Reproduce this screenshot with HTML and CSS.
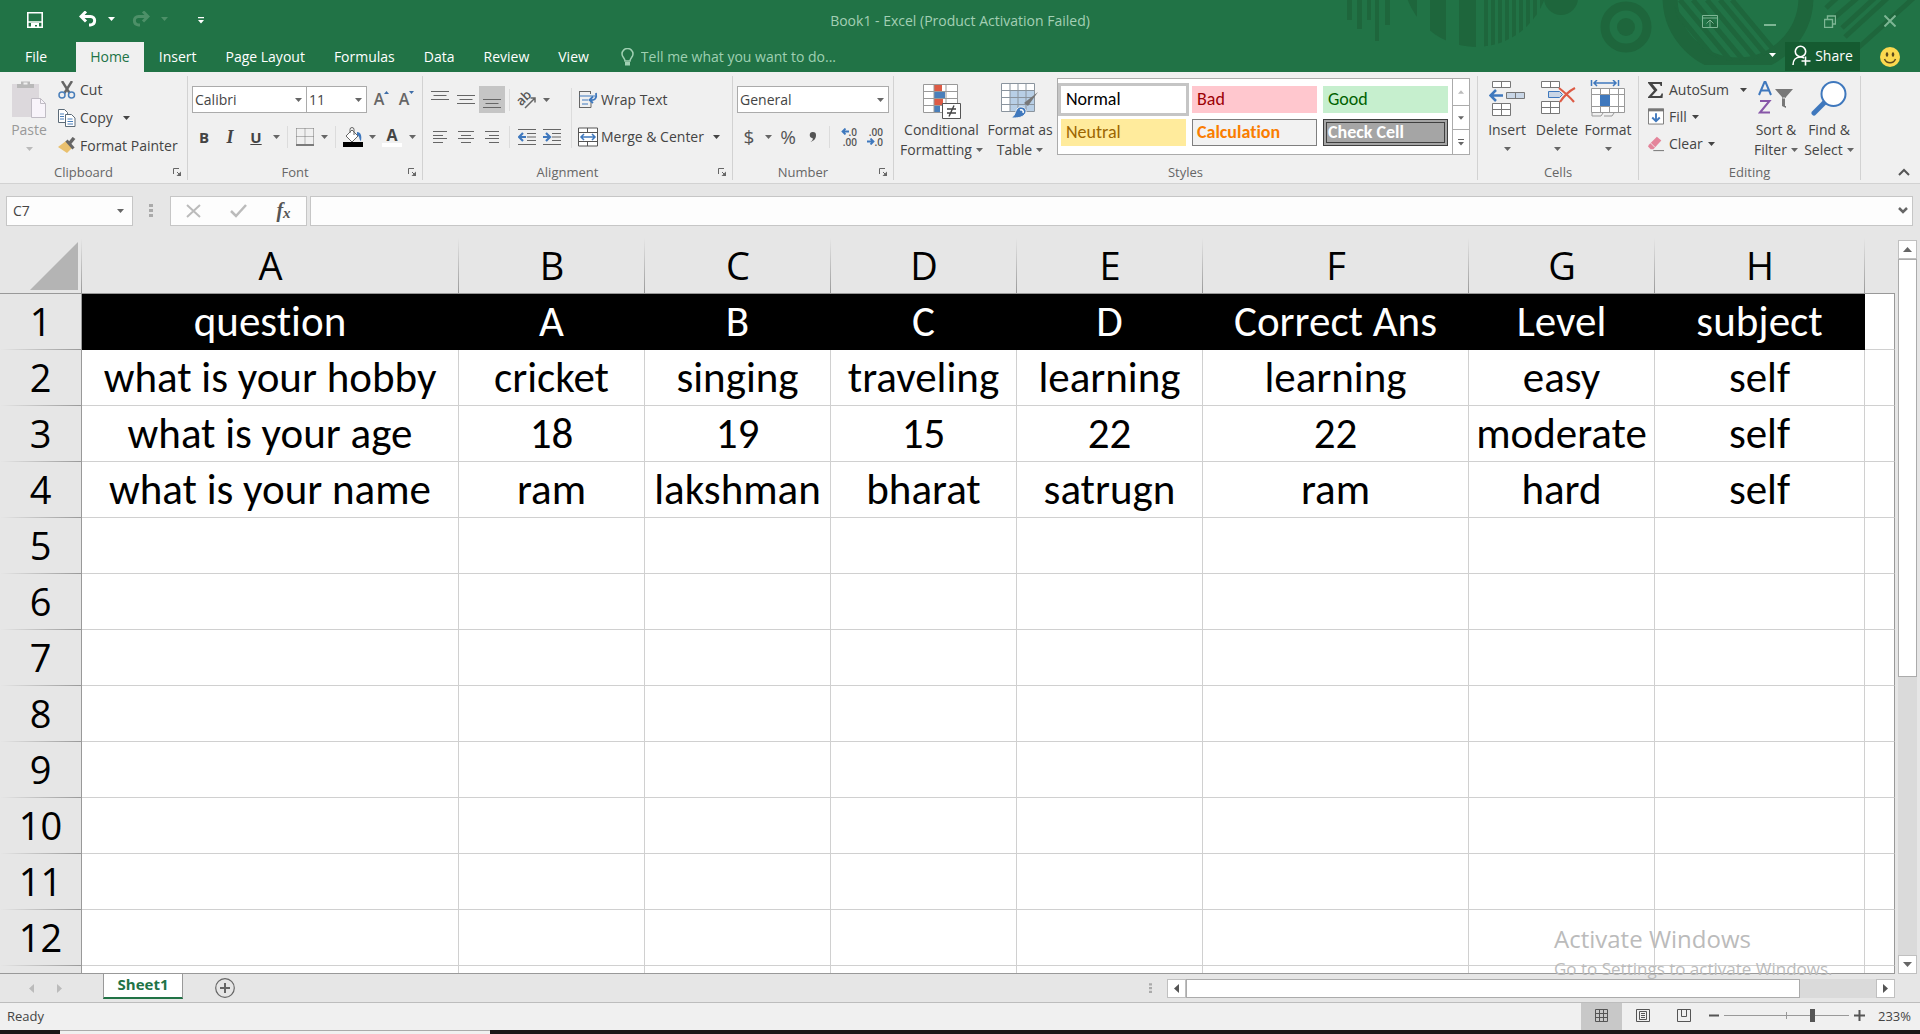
FILE: index.html
```html
<!DOCTYPE html>
<html lang="en">
<head>
<meta charset="utf-8">
<meta name="viewport" content="width=device-width, initial-scale=1">
<title>Book1 - Excel</title>
<link rel="stylesheet" href="styles.css">
</head>
<body>
<svg width="0" height="0" class="defs" aria-hidden="true">
  <symbol id="caret" viewBox="0 0 7 4"><path d="M0 0h7L3.5 4z" fill="currentColor"/></symbol>
  <symbol id="launcher" viewBox="0 0 9 9"><path d="M.5 6V.5H6M4 4l3 3" fill="none" stroke="#666"/><path d="M8 3.500V8H3.500z" fill="#666"/></symbol>
</svg>

<header class="top">
  <svg class="art" viewBox="0 0 590 72" width="590" height="72" aria-hidden="true">
    <defs>
      <clipPath id="c1"><circle cx="146" cy="-26" r="73"/></clipPath>
      <clipPath id="c2"><rect x="320" y="0" width="180" height="65"/></clipPath>
      <clipPath id="c3"><circle cx="408" cy="-3" r="64"/></clipPath>
    </defs>
    <g fill="#1e663c">
      <path d="M17 0h5v20h-5zM27 0h5v29h-5zM37 0h4v20h-4zM45 0h4v41h-4zM55 0h5v25h-5z"/>
      <path clip-path="url(#c1)" d="M72 0h15v50H72zM100 0h16v50h-16zM129 0h17v50h-17zM154 0h4v50h-4zM161 0h4v50h-4zM168 0h4v50h-4zM175 0h4v50h-4zM182 0h4v50h-4zM189 0h4v50h-4zM196 0h4v50h-4zM203 0h4v50h-4zM210 0h4v50h-4z"/>
      <circle cx="231" cy="-2" r="17"/>
      <circle cx="296" cy="27" r="9"/>
    </g>
    <g fill="none" stroke="#1e663c">
      <circle cx="296" cy="27" r="21" stroke-width="9"/>
      <circle clip-path="url(#c2)" cx="408" cy="-3" r="68" stroke-width="15"/>
      <path clip-path="url(#c3)" stroke-width="5" d="M336 0l60 72M350 0l60 72M363 0l60 72M377 0l60 72M390 0l60 72M402 0l50 60"/>
      <path stroke-width="5" d="M496 8l14-13M504 18l28-24M512 28l36-33M515 37l48-44M528 48l60-54"/>
    </g>
  </svg>
  <div class="titlebar">
    <div class="qat">
      <button class="q-save" aria-label="Save"><svg width="16" height="16" viewBox="0 0 16 16"><path d="M.8.8h14.400v14.400H.8zM1 10h14" fill="none" stroke="#fff" stroke-width="1.600"/><path d="M4 11h8v5h-2v-3H8v3H4z" fill="#fff"/></svg></button>
      <button class="q-undo" aria-label="Undo"><svg width="18" height="16" viewBox="0 0 18 16"><path d="M2 5.500h9.500c5.500 0 5.500 8 0 8.500H10" fill="none" stroke="#fff" stroke-width="3"/><path d="M7 .5L2 5.500l5 5" fill="none" stroke="#fff" stroke-width="3"/></svg></button>
      <button class="q-caret" aria-label="Undo list"><svg width="7" height="4"><use href="#caret"/></svg></button>
      <button class="q-redo" aria-label="Redo" disabled><svg width="18" height="16" viewBox="0 0 18 16"><path d="M16 5.500H6.500C1 5.500 1 13.500 6.500 14H8M11 .5l5 5-5 5" fill="none" stroke="#4d9068" stroke-width="3"/></svg></button>
      <button class="q-caret dim" aria-label="Redo list" disabled><svg width="7" height="4"><use href="#caret"/></svg></button>
      <button class="q-more" aria-label="Customize Quick Access Toolbar"><svg width="6" height="7" viewBox="0 0 6 7"><path d="M0 0h6v1.200H0zM0 3h6L3 6.500z" fill="#fff"/></svg></button>
    </div>
    <h1 class="title">Book1 - Excel (Product Activation Failed)</h1>
    <div class="winbtns">
      <button aria-label="Ribbon Display Options"><svg width="16" height="13" viewBox="0 0 16 13"><path d="M.5.5h15v12H.5zM.5 3h15M8 12V6M4.500 8.500L8 5l3.500 3.500" fill="none" stroke="#7db694"/></svg></button>
      <button aria-label="Minimize"><svg width="12" height="13" viewBox="0 0 12 13"><path d="M0 9h12v2H0z" fill="#7db694"/></svg></button>
      <button aria-label="Restore"><svg width="12" height="13" viewBox="0 0 12 13"><path d="M.5 4.500h8v8h-8zM3.500 4V1h8v8H9" fill="none" stroke="#7db694" stroke-width="1.400"/></svg></button>
      <button aria-label="Close"><svg width="12" height="12" viewBox="0 0 12 12"><path d="M.5.5l11 11M11.500.5l-11 11" stroke="#7db694" stroke-width="2"/></svg></button>
    </div>
  </div>
  <nav class="tabs">
    <a class="tab file" href="#file">File</a>
    <a class="tab active" href="#home" aria-current="page">Home</a>
    <a class="tab" href="#insert">Insert</a>
    <a class="tab" href="#layout">Page Layout</a>
    <a class="tab" href="#formulas">Formulas</a>
    <a class="tab" href="#data">Data</a>
    <a class="tab" href="#review">Review</a>
    <a class="tab" href="#view">View</a>
    <label class="tell"><svg width="13" height="19" viewBox="0 0 13 19"><path d="M4 13c0-3-3-3.500-3-7a5.500 5.500 0 0 1 11 0c0 3.500-3 4-3 7z" fill="none" stroke="#9fd0b2" stroke-width="1.500"/><path d="M4 14h5v3.500H4z" fill="#9fd0b2"/></svg><input type="text" placeholder="Tell me what you want to do..." aria-label="Tell me what you want to do"></label>
    <div class="account">
      <button class="acct-caret" aria-label="Account menu"><svg width="7" height="4"><use href="#caret"/></svg></button>
      <button class="share"><svg width="19" height="21" viewBox="0 0 19 21"><g fill="none" stroke="#fff" stroke-width="1.600"><circle cx="8.500" cy="6.500" r="5.200"/><path d="M1 20c0-4.500 2.500-8 7.500-8 1.500 0 2.500.3 3.500 1M13.500 11.500v9M9.500 16h9"/></g></svg>Share</button>
      <button class="smile" aria-label="Send a smile"><svg width="20" height="20" viewBox="0 0 20 20"><circle cx="10" cy="10" r="10" fill="#fbd94f"/><ellipse cx="7" cy="7.500" rx="1.300" ry="2.300" fill="#5c4a1c"/><ellipse cx="13" cy="7.500" rx="1.300" ry="2.300" fill="#5c4a1c"/><path d="M4.500 12c2 5 9 5 11 0" fill="none" stroke="#5c4a1c" stroke-width="1.500"/></svg></button>
    </div>
  </nav>
</header>

<section class="ribbon" aria-label="Home ribbon">
  <div class="group g-clip">
    <div class="body">
      <button class="big paste" disabled>
        <svg width="35" height="40" viewBox="0 0 35 40"><path d="M0 4h27v33H0z" fill="#dcd8dc"/><path d="M5 8V4h4V1.500h9V4h4v4z" fill="#b9b9b9"/><path d="M11.500 2.500h4v2h-4z" fill="#f0f0f0"/><path d="M19.500 18.500h9l5 5v14h-14z" fill="#f8f4fa" stroke="#c0bcc4"/><path d="M28.500 18.500v5h5" fill="none" stroke="#c0bcc4"/></svg>
        <span>Paste</span><svg width="7" height="4" viewBox="0 0 7 4"><path d="M0 0h7L3.500 4z" fill="#bbb"/></svg>
      </button>
      <div class="lines">
        <button class="line"><svg width="18" height="18" viewBox="0 0 18 18"><path d="M4 0l7.500 12M14 0L6.500 12" stroke="#666" stroke-width="2.400"/><g fill="none" stroke="#4a7fba" stroke-width="1.500"><circle cx="4" cy="14" r="3"/><circle cx="13.500" cy="14" r="3"/></g></svg>Cut</button>
        <button class="line"><svg width="18" height="18" viewBox="0 0 18 18"><g fill="#fff" stroke="#5c6b78"><path d="M.5.5h6l3 3v10h-9z"/><path d="M7.500 5.500h6l3.500 3.500v8.500h-9.500z"/></g><path d="M2 5h4M2 7.500h4M2 10h4M9.500 10h5M9.500 12.500h5.500M9.500 15h5.500" stroke="#4a7fba"/></svg>Copy<svg class="gap" width="7" height="4"><use href="#caret"/></svg></button>
        <button class="line"><svg width="18" height="18" viewBox="0 0 18 18"><path d="M8 4l6 7-5 5-9-6z" fill="#e9c06e"/><path d="M8.500 3.500l7 8" stroke="#666" stroke-width="3"/><path d="M11 7l5-6" stroke="#666" stroke-width="3.500"/></svg>Format Painter</button>
      </div>
    </div>
    <div class="foot"><span>Clipboard</span><button aria-label="Clipboard settings"><svg width="9" height="9"><use href="#launcher"/></svg></button></div>
  </div>

  <div class="group g-font">
    <div class="body rows">
      <div class="row">
        <label class="combo w-font"><select aria-label="Font"><option>Calibri</option></select><svg width="7" height="4"><use href="#caret"/></svg></label><label class="combo w-size"><select aria-label="Font size"><option>11</option></select><svg width="7" height="4"><use href="#caret"/></svg></label>
        <button class="tb step" aria-label="Increase font size"><span class="up">A</span><svg width="5" height="3" viewBox="0 0 7 4"><path d="M0 4h7L3.500 0z" fill="#3d6da8"/></svg></button>
        <button class="tb step" aria-label="Decrease font size"><span class="down">A</span><svg width="5" height="3" viewBox="0 0 7 4"><path d="M0 0h7L3.500 4z" fill="#3d6da8"/></svg></button>
      </div>
      <div class="row">
        <button class="tb b">B</button><button class="tb i">I</button><button class="tb u">U</button><button class="dd" aria-label="Underline styles"><svg width="7" height="4"><use href="#caret"/></svg></button>
        <i class="sep"></i>
        <button class="tb n" aria-label="Borders"><svg width="18" height="18" viewBox="0 0 18 18"><path d="M.5.5v16M17.500.5v16M9 .5v16M.5.5h17M.5 8.500h17" stroke="#777" stroke-dasharray="1 1" fill="none"/><path d="M0 17h18" stroke="#555" stroke-width="1.500"/></svg></button><button class="dd" aria-label="Border styles"><svg width="7" height="4"><use href="#caret"/></svg></button>
        <i class="sep"></i>
        <button class="tb n" aria-label="Fill color"><svg width="20" height="20" viewBox="0 0 20 20"><path d="M3 9l6-6 6 6-6 6z" fill="#fff" stroke="#666"/><path d="M7 6V2.500a2 2 0 0 1 4 0V8" fill="none" stroke="#666"/><path d="M14 5c4 0 5 4 4 9-2-1-1-5-4-6z" fill="#3f78bd"/><path d="M0 15h20v5H0z" fill="#000"/></svg></button><button class="dd" aria-label="Fill colors"><svg width="7" height="4"><use href="#caret"/></svg></button>
        <button class="tb fc" aria-label="Font color"><span>A</span></button><button class="dd" aria-label="Font colors"><svg width="7" height="4"><use href="#caret"/></svg></button>
      </div>
    </div>
    <div class="foot"><span>Font</span><button aria-label="Font settings"><svg width="9" height="9"><use href="#launcher"/></svg></button></div>
  </div>

  <div class="group g-align">
    <div class="body">
      <div class="rows">
        <div class="row">
          <button class="tb" aria-label="Top align"><svg width="18" height="18" viewBox="0 0 18 18"><path d="M0 .5h18M2.500 4.500h13M0 8.500h18" stroke="#666"/></svg></button><button class="tb" aria-label="Middle align"><svg width="18" height="18" viewBox="0 0 18 18"><path d="M0 4.500h18M2.500 8.500h13M0 12.500h18" stroke="#666"/></svg></button><button class="tb on" aria-label="Bottom align" aria-pressed="true"><svg width="18" height="18" viewBox="0 0 18 18"><path d="M0 8.500h18M2.500 12.500h13M0 16.500h18" stroke="#666"/></svg></button>
          <i class="sep"></i>
          <button class="tb n" aria-label="Orientation"><svg class="free" width="20" height="20" viewBox="0 0 20 20"><text x="-1" y="12" transform="rotate(-45 7 8)" class="ab">ab</text><path d="M8 18L18 8M13.500 8H18v4.500" fill="none" stroke="#666" stroke-width="1.500"/></svg></button><button class="dd" aria-label="Orientations"><svg width="7" height="4"><use href="#caret"/></svg></button>
        </div>
        <div class="row">
          <button class="tb" aria-label="Align left"><svg width="14" height="14" viewBox="0 0 14 14"><path d="M0 1.500h14M0 5.500h10M0 8.500h14M0 12.500h10" stroke="#666"/></svg></button><button class="tb" aria-label="Center"><svg width="16" height="14" viewBox="0 0 16 14"><path d="M0 1.500h16M3 5.500h10M0 8.500h16M3 12.500h10" stroke="#666"/></svg></button><button class="tb" aria-label="Align right"><svg width="14" height="14" viewBox="0 0 14 14"><path d="M0 1.500h14M4 5.500h10M0 8.500h14M4 12.500h10" stroke="#666"/></svg></button>
          <i class="sep"></i>
          <button class="tb n" aria-label="Decrease indent"><svg width="18" height="16" viewBox="0 0 18 16"><path d="M0 .5h18M9 4.500h9M9 8h9M9 11.500h9M0 15.500h18" stroke="#666"/><path d="M8 8H2M5 4L1 8l4 4" fill="none" stroke="#3f78bd" stroke-width="2.200"/></svg></button><button class="tb" aria-label="Increase indent"><svg width="18" height="16" viewBox="0 0 18 16"><path d="M0 .5h18M9 4.500h9M9 8h9M9 11.500h9M0 15.500h18" stroke="#666"/><path d="M0 8h6M3 4l4 4-4 4" fill="none" stroke="#3f78bd" stroke-width="2.200"/></svg></button>
        </div>
      </div>
      <i class="tall"></i>
      <div class="rows">
        <div class="row"><button class="line"><svg width="20" height="19" viewBox="0 0 20 19"><path d="M1.500 1.500h11M1.500 1v17M1 17.500h12V12M12.500 1v3" fill="none" stroke="#666"/><path d="M1.500 6h16M4 10h6M4 14h6" stroke="#3f78bd"/><path d="M18 3c1 5-1 8-6 7M15 6.500L11.500 10l3.500 3" fill="none" stroke="#3f78bd" stroke-width="1.800"/></svg>Wrap Text</button></div>
        <div class="row"><button class="line"><svg width="20" height="20" viewBox="0 0 20 20"><path d="M.5 1h19v18H.5zM.5 5.500h19M.5 14.500h19M9.500 1v4.500M9.500 14.500V19" fill="#fff" stroke="#555"/><path d="M3 10h14M6 7l-3 3 3 3M14 7l3 3-3 3" fill="none" stroke="#3f78bd" stroke-width="1.500"/></svg>Merge &amp; Center<svg class="gap" width="7" height="4"><use href="#caret"/></svg></button></div>
      </div>
    </div>
    <div class="foot"><span>Alignment</span><button aria-label="Alignment settings"><svg width="9" height="9"><use href="#launcher"/></svg></button></div>
  </div>

  <div class="group g-num">
    <div class="body rows">
      <div class="row"><label class="combo w-num"><select aria-label="Number format"><option>General</option></select><svg width="7" height="4"><use href="#caret"/></svg></label></div>
      <div class="row">
        <button class="tb n sym">$</button><button class="dd" aria-label="Currencies"><svg width="7" height="4"><use href="#caret"/></svg></button><button class="tb sym">%</button><button class="tb n" aria-label="Comma style"><svg width="8" height="12" viewBox="0 0 8 12"><path d="M4 1a3 3 0 0 1 3 3c0 4-2 5.500-5.500 7C4 9 4 8 3.500 7A3 3 0 0 1 4 1z" fill="#555"/></svg></button>
        <i class="sep"></i>
        <button class="tb dec" aria-label="Increase decimal"><span><svg width="8" height="7" viewBox="0 0 8 7"><path d="M8 3.500H2M4.500.5l-3 3 3 3" fill="none" stroke="#3f78bd" stroke-width="1.800"/></svg>.0</span><span>.00</span></button><button class="tb dec" aria-label="Decrease decimal"><span>.00</span><span><svg width="8" height="7" viewBox="0 0 8 7"><path d="M0 3.500h6M3.500.5l3 3-3 3" fill="none" stroke="#3f78bd" stroke-width="1.800"/></svg>.0</span></button>
      </div>
    </div>
    <div class="foot"><span>Number</span><button aria-label="Number settings"><svg width="9" height="9"><use href="#launcher"/></svg></button></div>
  </div>

  <div class="group g-styles">
    <div class="body">
      <button class="big cf">
        <svg width="38" height="40" viewBox="0 0 38 40"><path d="M.5 4.500h34v28H.5z" fill="#fff"/><path d="M11 4h8v7h-8zM11 18h9v8h-9z" fill="#dd5b45"/><path d="M11 11h11v7H11zM11 26h6v7h-6z" fill="#4a7fba"/><path d="M.5 4.500h34v28H.5zM.5 11.500h34M.5 18.500h34M.5 25.500h34M11 4v29M23 4v29" fill="none" stroke="#999"/><path d="M19.500 23.500h18v15h-18z" fill="#fff" stroke="#555"/><path d="M24 29h9M24 33h9M31 25.500l-5 11" stroke="#444" stroke-width="1.400"/></svg>
        <span>Conditional</span><span>Formatting <svg width="7" height="4"><use href="#caret"/></svg></span>
      </button>
      <button class="big ft">
        <svg width="38" height="40" viewBox="0 0 38 40"><path d="M.5 3.500h33v28H.5z" fill="#fff"/><path d="M9 10h25v21H9z" fill="#b8cfe6"/><path d="M.5 3.500h33v28H.5zM.5 10.500h33M.5 17.500h33M.5 24.500h33M9 3.500v28M17 3.500v28M25 3.500v28" fill="none" stroke="#8a949e"/><path d="M37 12L27 26l-4-3z" fill="#777"/><path d="M10 38c4-2 4-6 6-9 4-5 12 0 8 5-3 4-8 4-14 4z" fill="#3f78bd" stroke="#f0f0f0"/><path d="M19 30c2-1 4 1 3 3" fill="none" stroke="#fff" stroke-width="1.500"/></svg>
        <span>Format as</span><span>Table <svg width="7" height="4"><use href="#caret"/></svg></span>
      </button>
      <div class="gallery">
        <div class="swatches">
          <button class="sw normal">Normal</button><button class="sw bad">Bad</button><button class="sw good">Good</button>
          <button class="sw neutral">Neutral</button><button class="sw calc">Calculation</button><button class="sw check">Check Cell</button>
        </div>
        <div class="gscroll">
          <button aria-label="Previous styles" disabled><svg width="6" height="4" viewBox="0 0 7 4"><path d="M0 4h7L3.500 0z" fill="#bbb"/></svg></button>
          <button aria-label="Next styles"><svg width="6" height="4"><use href="#caret"/></svg></button>
          <button aria-label="More styles"><svg width="6" height="7" viewBox="0 0 6 7"><path d="M0 0h6v1H0zM0 3h6L3 6.500z" fill="#666"/></svg></button>
        </div>
      </div>
    </div>
    <div class="foot"><span>Styles</span></div>
  </div>

  <div class="group g-cells">
    <div class="body">
      <button class="big ins">
        <svg width="37" height="40" viewBox="0 0 37 40"><g fill="#fff" stroke="#777"><path d="M3.500 1.500h18v6h-18zM12.500 1.500v6M3.500 23.500h18v12h-18zM12.500 23.500v12M3.500 29.500h18"/><path d="M17.500 12.500h18v6h-18zM26.500 12.500v6" fill="#c9d6e6"/></g><path d="M14 15.500H3M7 10l-5.500 5.500L7 21" fill="none" stroke="#3f78bd" stroke-width="2.500"/></svg>
        <span>Insert</span><svg width="7" height="4"><use href="#caret"/></svg>
      </button>
      <button class="big del">
        <svg width="37" height="40" viewBox="0 0 37 40"><g fill="#fff" stroke="#777"><path d="M2.500 1.500h18v6h-18zM11.500 1.500v6M2.500 21.500h18v12h-18zM11.500 21.500v12M2.500 27.500h18"/><path d="M9.500 11.500h11l3 3-3 3h-11z" fill="#c9d6e6" stroke="#3f78bd"/></g><path d="M20 8c5 4 10 8 15 14M36 8c-6 3-11 8-15 14" fill="none" stroke="#dd5b45" stroke-width="2.200"/></svg>
        <span>Delete</span><svg width="7" height="4"><use href="#caret"/></svg>
      </button>
      <button class="big fmt">
        <svg width="37" height="40" viewBox="0 0 37 40"><path d="M1.500 0v6M28.500 0v6M4 3h22M7 0L4 3l3 3M23 0l3 3-3 3" fill="none" stroke="#3f78bd" stroke-width="1.500"/><path d="M1.500 8.500h33v24h-33z" fill="#fff"/><path d="M1.500 8.500h33v24h-33zM1.500 14.500h33M1.500 26.500h33M10.500 8.500v24M19.500 8.500v24M28.500 8.500v24M2 33v3h9l2-3M14 36h8l2-3" fill="none" stroke="#999"/><path d="M10 15h10v11H10z" fill="#3f78bd"/></svg>
        <span>Format</span><svg width="7" height="4"><use href="#caret"/></svg>
      </button>
    </div>
    <div class="foot"><span>Cells</span></div>
  </div>

  <div class="group g-edit">
    <div class="body">
      <div class="lines">
        <button class="line"><svg width="16" height="16" viewBox="0 0 16 16"><path d="M0 0h14v4h-1.500c0-1.500-.5-2-2-2H4.500l5 6-5.500 6h7c1.500 0 2-.5 2.500-2.500H15L14.500 16H0v-1l6-6.500L0 1z" fill="#444"/></svg>AutoSum<svg class="gap" width="7" height="4"><use href="#caret"/></svg></button>
        <button class="line"><svg width="16" height="18" viewBox="0 0 17 18"><path d="M.5.5h16v16H.5z" fill="#fff" stroke="#777"/><path d="M0 0h17v3H0z" fill="#777"/><path d="M8.500 5v8M4.500 9.500l4 4 4-4" fill="none" stroke="#3f78bd" stroke-width="2"/></svg>Fill<svg width="7" height="4"><use href="#caret"/></svg></button>
        <button class="line"><svg width="16" height="17" viewBox="0 0 18 17"><path d="M1 10L10 1l5 4-9 10H3l-3-3z" fill="#e4849a"/><path d="M3 8l5 5" stroke="#f0f0f0"/><path d="M6 16.500h12" stroke="#666"/></svg>Clear<svg width="7" height="4"><use href="#caret"/></svg></button>
      </div>
      <button class="big sort">
        <svg width="36" height="40" viewBox="0 0 36 40"><path d="M1 15L6.500 2h1L13 15M3 10.500h8" fill="none" stroke="#3f78bd" stroke-width="2"/><path d="M2 21h9.500L2 32.500h10" fill="none" stroke="#8757a8" stroke-width="2"/><path d="M17 9h18l-7 8v11l-4-2v-9z" fill="#777"/><path d="M24.500 18h3v8" fill="none" stroke="#f0f0f0"/></svg>
        <span>Sort &amp;</span><span>Filter <svg width="7" height="4"><use href="#caret"/></svg></span>
      </button>
      <button class="big find">
        <svg width="36" height="40" viewBox="0 0 36 40"><path d="M3 33l10-10" stroke="#3f78bd" stroke-width="5" stroke-linecap="round"/><circle cx="22.500" cy="14" r="12" fill="#fff" stroke="#3f78bd" stroke-width="2"/></svg>
        <span>Find &amp;</span><span>Select <svg width="7" height="4"><use href="#caret"/></svg></span>
      </button>
    </div>
    <div class="foot"><span>Editing</span></div>
  </div>
  <div class="collapse"><button aria-label="Collapse the ribbon"><svg width="12" height="8" viewBox="0 0 12 8"><path d="M1 7l5-5 5 5" fill="none" stroke="#555" stroke-width="2"/></svg></button></div>
</section>

<section class="formula">
  <label class="namebox"><input type="text" value="C7" aria-label="Name box"><svg width="7" height="4"><use href="#caret"/></svg></label>
  <svg class="dots" width="4" height="14" viewBox="0 0 4 14"><path d="M0 0h4v3H0zM0 5h4v3H0zM0 10h4v3H0z" fill="#aaa"/></svg>
  <div class="fx">
    <button aria-label="Cancel"><svg width="15" height="14" viewBox="0 0 15 14"><path d="M1 1l13 12M14 1L1 13" stroke="#bbb" stroke-width="2"/></svg></button>
    <button aria-label="Enter"><svg width="17" height="14" viewBox="0 0 17 14"><path d="M1 7l5 5L16 1" fill="none" stroke="#bbb" stroke-width="2.500"/></svg></button>
    <button class="fxb">f<span>x</span></button>
  </div>
  <label class="entry"><input type="text" aria-label="Formula bar"><svg width="10" height="7" viewBox="0 0 10 7"><path d="M1 1l4 4 4-4" fill="none" stroke="#666" stroke-width="2.500"/></svg></label>
</section>

<main class="work">
  <div class="grid">
    <table>
      <colgroup><col class="c-head"><col class="c-a"><col class="c-s"><col class="c-s"><col class="c-s"><col class="c-s"><col class="c-f"><col class="c-s"><col class="c-h"><col></colgroup>
      <thead><tr><th class="corner"><svg width="48" height="48" viewBox="0 0 48 48"><path d="M48 0v48H0z" fill="#b4b4b4"/></svg></th><th>A</th><th>B</th><th>C</th><th>D</th><th>E</th><th>F</th><th>G</th><th>H</th><th></th></tr></thead>
      <tbody>
        <tr class="black"><th>1</th><td>question</td><td>A</td><td>B</td><td>C</td><td>D</td><td>Correct Ans</td><td>Level</td><td>subject</td><td></td></tr>
        <tr><th>2</th><td>what is your hobby</td><td>cricket</td><td>singing</td><td>traveling</td><td>learning</td><td>learning</td><td>easy</td><td>self</td><td></td></tr>
        <tr><th>3</th><td>what is your age</td><td>18</td><td>19</td><td>15</td><td>22</td><td>22</td><td>moderate</td><td>self</td><td></td></tr>
        <tr><th>4</th><td>what is your name</td><td>ram</td><td>lakshman</td><td>bharat</td><td>satrugn</td><td>ram</td><td>hard</td><td>self</td><td></td></tr>
        <tr><th>5</th><td></td><td></td><td></td><td></td><td></td><td></td><td></td><td></td><td></td></tr>
        <tr><th>6</th><td></td><td></td><td></td><td></td><td></td><td></td><td></td><td></td><td></td></tr>
        <tr><th>7</th><td></td><td></td><td></td><td></td><td></td><td></td><td></td><td></td><td></td></tr>
        <tr><th>8</th><td></td><td></td><td></td><td></td><td></td><td></td><td></td><td></td><td></td></tr>
        <tr><th>9</th><td></td><td></td><td></td><td></td><td></td><td></td><td></td><td></td><td></td></tr>
        <tr><th>10</th><td></td><td></td><td></td><td></td><td></td><td></td><td></td><td></td><td></td></tr>
        <tr><th>11</th><td></td><td></td><td></td><td></td><td></td><td></td><td></td><td></td><td></td></tr>
        <tr><th>12</th><td></td><td></td><td></td><td></td><td></td><td></td><td></td><td></td><td></td></tr>
        <tr><th></th><td></td><td></td><td></td><td></td><td></td><td></td><td></td><td></td><td></td></tr>
      </tbody>
    </table>
  </div>
  <div class="vscroll">
    <button aria-label="Scroll up"><svg width="9" height="5" viewBox="0 0 9 5"><path d="M0 5h9L4.500 0z" fill="#666"/></svg></button>
    <div class="vtrack"><div class="vthumb"></div></div>
    <button aria-label="Scroll down"><svg width="9" height="5" viewBox="0 0 9 5"><path d="M0 0h9L4.500 5z" fill="#666"/></svg></button>
  </div>
  <div class="watermark"><p class="w1">Activate Windows</p><p class="w2">Go to Settings to activate Windows.</p></div>
</main>

<footer>
  <div class="sheets">
    <button class="nav" aria-label="Previous sheet"><svg width="5" height="9" viewBox="0 0 5 9"><path d="M5 0v9L0 4.500z" fill="#bbb"/></svg></button>
    <button class="nav" aria-label="Next sheet"><svg width="5" height="9" viewBox="0 0 5 9"><path d="M0 0v9l5-4.500z" fill="#bbb"/></svg></button>
    <a class="sheet" href="#sheet1">Sheet1</a>
    <button class="add" aria-label="New sheet"><svg width="20" height="20" viewBox="0 0 20 20"><circle cx="10" cy="10" r="9.300" fill="none" stroke="#666" stroke-width="1.200"/><path d="M10 5v10M5 10h10" stroke="#666" stroke-width="2"/></svg></button>
    <div class="hscroll">
      <svg class="dots" width="3" height="13" viewBox="0 0 4 14"><path d="M0 0h4v3H0zM0 5h4v3H0zM0 10h4v3H0z" fill="#aaa"/></svg>
      <button aria-label="Scroll left"><svg width="5" height="9" viewBox="0 0 5 9"><path d="M5 0v9L0 4.500z" fill="#555"/></svg></button>
      <div class="htrack"><div class="hthumb"></div></div>
      <button aria-label="Scroll right"><svg width="5" height="9" viewBox="0 0 5 9"><path d="M0 0v9l5-4.500z" fill="#555"/></svg></button>
    </div>
  </div>
  <div class="status">
    <span class="ready">Ready</span>
    <button class="view on" aria-label="Normal view" aria-pressed="true"><svg width="14" height="13" viewBox="0 0 14 13"><path d="M.5.5h12v12H.5zM.5 4.500h12M.5 8.500h12M4.500.5v12M8.500.5v12" fill="none" stroke="#555"/></svg></button>
    <button class="view" aria-label="Page layout view"><svg width="14" height="13" viewBox="0 0 14 13"><path d="M.5.5h13v12H.5zM3.500 2.500h7v8h-7zM5 4.500h4M5 6.500h4M5 8.500h4" fill="none" stroke="#555"/></svg></button>
    <button class="view" aria-label="Page break preview"><svg width="14" height="13" viewBox="0 0 14 13"><path d="M.5.5h13v12H.5zM4.500.5v7h5v-7" fill="none" stroke="#555"/></svg></button>
    <button class="zb" aria-label="Zoom out"><svg width="11" height="11" viewBox="0 0 11 11"><path d="M0 5.500h10" stroke="#555" stroke-width="2"/></svg></button>
    <input class="zoom" type="range" min="0" max="100" value="72" aria-label="Zoom">
    <button class="zb" aria-label="Zoom in"><svg width="11" height="11" viewBox="0 0 11 11"><path d="M0 5.500h11M5.500 0v11" stroke="#555" stroke-width="2"/></svg></button>
    <button class="pct">233%</button>
  </div>
  <div class="taskbar"><div class="peek"></div></div>
</footer>
</body>
</html>
```
FILE: styles.css
```css
* { box-sizing: border-box; }
body {
  margin: 0;
  height: 100vh;
  display: flex;
  flex-direction: column;
  overflow: hidden;
  background: #e6e6e6;
  color: #444;
  font: 14px/20px "Open Sans", "Noto Sans", sans-serif;
  font-variant-ligatures: none;
}
button, input, select { font: inherit; color: inherit; border: 0; background: none; margin: 0; padding: 0; outline: none; }
button { display: flex; align-items: center; justify-content: center; }
svg { display: block; flex: none; }
.defs { position: absolute; }
.free { overflow: visible; }

/* title bar and tabs */
.top { position: relative; background: #217346; color: #fff; }
.art { position: absolute; top: 0; right: 0; }
.titlebar, .tabs { position: relative; display: flex; }
.titlebar { height: 42px; display: grid; grid-template-columns: 1fr auto 1fr; align-items: center; }
.qat { display: flex; align-items: center; height: 42px; padding: 0 0 4px 27px; }
.q-save { width: 16px; margin: 2px 36px 0 0; }
.q-undo, .q-redo { width: 18px; }
.q-caret { width: 29px; }
.q-caret.dim { color: #4d9068; }
.q-redo { margin-left: 6px; }
.q-more { width: 6px; margin: 2px 0 0 19px; }
.title { margin: 0; font-size: 14px; font-weight: 400; color: #a3cfb4; }
.winbtns { display: flex; justify-content: flex-end; }
.winbtns button { width: 60px; height: 40px; }
.tabs { align-items: stretch; height: 30px; }
.tab { padding: 5px 14px 5px 15px; color: #fff; text-decoration: none; }
.tab.file { padding: 5px 29px 5px 25px; }
.tab.active { background: #f0f0f0; color: #217346; padding: 5px 14px; }
.tell { display: flex; align-items: center; gap: 7px; margin-left: 18px; }
.tell input { width: 240px; height: 20px; }
.tell input::placeholder { color: #9fd0b2; opacity: 1; }
.account { display: flex; margin-left: auto; padding-right: 20px; }
.acct-caret { width: 26px; padding-bottom: 4px; }
.share { width: 75px; height: 29px; gap: 4px; padding-bottom: 2px; background: #155b31; color: #fff; }
.smile { width: 20px; margin-left: 20px; }

/* ribbon */
.ribbon { display: flex; height: 112px; padding: 4px 0 3px; background: #f0f0f0; border-bottom: 1px solid #d2d2d2; }
.group { display: flex; flex-direction: column; flex: none; border-right: 1px solid #d2d2d2; }
.g-clip { width: 188px; }
.g-font { width: 235px; }
.g-align { width: 310px; }
.g-num { width: 161px; }
.g-styles { width: 584px; }
.g-cells { width: 161px; }
.g-edit { width: 222px; }
.body { display: flex; flex: 1; align-items: flex-start; }
.foot { display: grid; grid-template-columns: 20px 1fr 20px; height: 16px; line-height: 16px; font-size: 13px; color: #666; text-align: center; }
.foot span { grid-column: 2; }
.g-clip .foot, .g-font .foot, .g-align .foot, .g-num .foot { grid-template-columns: 0 1fr 20px; }
.big { flex-direction: column; justify-content: flex-start; white-space: nowrap; color: #666; }
.big > svg:first-child { margin-top: 4px; }
.big > span { display: flex; align-items: center; gap: 4px; height: 20px; color: #444; }
.big > span svg { color: #666; }
.big > svg:last-child { margin-top: 7px; }
.dd, .combo, .gscroll, .namebox { color: #666; }
.paste { width: 52px; margin: 0 3px; }
.paste > span { color: #999; }
.lines { display: flex; flex-direction: column; }
.line { height: 28px; gap: 4px; justify-content: flex-start; color: #444; white-space: nowrap; }
.line .gap { margin-left: 6px; }
.rows { display: flex; flex-direction: column; gap: 10px; padding-top: 10px; }
.body.rows { flex-direction: column; }
.row { display: flex; align-items: center; height: 27px; }
.row .line { height: 27px; gap: 3px; }
.g-align .body > .rows:first-child, .g-num .rows { padding-left: 4px; }
.g-font .rows { padding-left: 3px; }
.tb { width: 26px; height: 27px; flex: none; color: #444; }
.tb.n { width: 24px; }
.tb.on { background: #c5c5c5; }
.dd { width: 14px; height: 27px; flex: none; }
.sep { width: 1px; height: 22px; margin: 0 5px 0 4px; background: #dcdcdc; }
.tall { width: 1px; height: 60px; margin: 12px 6px 0; background: #dcdcdc; }
.combo { display: grid; height: 27px; border: 1px solid #ababab; background: #fff; align-items: center; }
.combo select { grid-area: 1 / 1; width: 100%; height: 25px; appearance: none; padding-left: 2px; color: #444; }
.combo svg { grid-area: 1 / 1; justify-self: end; margin-right: 4px; pointer-events: none; }
.w-font { width: 115px; margin: 0 -1px 0 1px; }
.w-size { width: 61px; margin-right: 2px; }
.w-num { width: 152px; }
.b, .i, .u { font-weight: 700; font-size: 15px; }
.i { font-family: "Liberation Serif", serif; font-style: italic; font-size: 18px; }
.u { text-decoration: underline; }
.step { align-items: flex-start; padding-top: 3px; width: 25px; font-weight: 600; font-size: 16px; color: #666; }
.step svg { margin-top: 2px; }
.fc span { font-weight: 700; font-size: 16px; line-height: 17px; height: 20px; width: 20px; border-bottom: 4px solid #fff; }
.sym { font-size: 19px; color: #555; }
.ab { font: 600 13px "Open Sans", sans-serif; fill: #555; }
.dec { flex-direction: column; align-items: center; font-weight: 600; font-size: 10px; line-height: 10px; color: #555; }
.dec span { display: flex; align-items: center; justify-content: flex-end; width: 18px; }

.cf { width: 85px; margin-left: 5px; }
.ft { width: 70px; margin-left: 1px; }
.gallery { display: flex; width: 413px; height: 77px; margin: 2px 0 0 2px; border: 1px solid #ababab; background: #fff; }
.swatches { flex: 1; display: grid; grid-template-columns: repeat(3, 125px); grid-auto-rows: 27px; gap: 6px; padding: 7px 3px; }
.sw { justify-content: flex-start; padding-left: 5px; font: 18px/27px Calibri, Carlito, Lato, sans-serif; font-variant-ligatures: none; }
.normal { color: #000; background: #fff; outline: 3px solid #c5c5c5; }
.bad { background: #ffc7ce; color: #9c0006; }
.good { background: #c6efce; color: #006100; }
.neutral { background: #ffeb9c; color: #9c6500; }
.calc { background: #f2f2f2; color: #fa7d00; border: 1px solid #7f7f7f; font-weight: 700; padding-left: 4px; }
.check { background: #a5a5a5; color: #fff; border: 4px double #3f3f3f; font-weight: 700; padding-left: 1px; line-height: 19px; }
.gscroll { display: grid; grid-template-rows: 26px 24px 1fr; width: 17px; border-left: 1px solid #ababab; }
.gscroll button + button { border-top: 1px solid #ababab; }

.ins { width: 52px; margin-left: 3px; }
.del { width: 48px; }
.fmt { width: 54px; }
.g-edit .lines { width: 109px; padding-left: 9px; }
.g-edit .line { height: 27px; gap: 5px; }
.sort { width: 56px; }
.find { width: 50px; }
.collapse { flex: 1; display: flex; align-items: flex-end; justify-content: flex-end; padding: 0 10px 4px 0; }

/* formula bar */
.formula { display: flex; align-items: center; height: 54px; padding: 0 7px 1px 6px; }
.namebox, .fx, .entry { display: flex; align-items: center; height: 30px; background: #fdfdfd; border: 1px solid #c6c6c6; }
.namebox { width: 127px; padding: 0 8px 0 6px; }
.namebox input { flex: 1; min-width: 0; color: #444; }
.formula .dots { margin: 0 17px 0 16px; }
.fx { width: 137px; margin-right: 3px; }
.fx button { width: 45px; height: 28px; }
.fxb { font: italic 700 20px "Liberation Serif", serif; color: #555; }
.fxb span { font-size: 15px; padding-top: 5px; }
.entry { flex: 1; padding-right: 4px; }
.entry input { flex: 1; }

/* sheet */
.work { position: relative; flex: 1 1 0; min-height: 0; display: flex; }
.grid { flex: 1; min-width: 0; overflow: hidden; border-bottom: 1px solid #999; }
table { width: 100%; table-layout: fixed; border-collapse: separate; border-spacing: 0; }
.c-head { width: 82px; }
.c-a { width: 377px; }
.c-s { width: 186px; }
.c-f { width: 266px; }
.c-h { width: 210px; }
th, td { height: 56px; padding: 0; text-align: center; vertical-align: middle; white-space: nowrap; line-height: 50px; }
td { border-right: 1px solid #d0d0d0; border-bottom: 1px solid #d0d0d0; background: #fff; color: #000; font-family: Calibri, Carlito, Lato, sans-serif; font-size: 43px; }
td:last-child { border-right-color: #999; }
th { font-size: 38px; line-height: 48px; font-weight: 400; color: #000; background: #e6e6e6; }
tbody th { padding-bottom: 2px; }
thead th { padding-bottom: 2px; border-bottom: 1px solid #999; background: linear-gradient(to bottom, #e6e6e6, #999) right / 1px 100% no-repeat; }
thead th:last-child { background: none; }
tbody th { border-right: 1px solid #999; background: linear-gradient(to right, #e6e6e6, #999) bottom / 100% 1px no-repeat; }
.corner svg { margin: 3px 0 0 30px; }
.black td:not(:last-child) { background: #000; border-color: #000; color: #fff; }
.vscroll { display: flex; flex-direction: column; width: 25px; padding: 2px 3px 0; }
.vscroll button, .hscroll button { height: 19px; width: 19px; flex: none; background: #fff; border: 1px solid #c0c0c0; }
.vtrack { flex: 1; background: #dadada; }
.vthumb { height: 60%; background: #fff; border: 1px solid #ababab; }
.watermark { position: absolute; right: 82px; bottom: -7px; width: 284px; color: #bbb; white-space: nowrap; }
.watermark p { margin: 0; }
.w1 { font-size: 24px; line-height: 36px; }
.w2 { font-size: 17px; line-height: 24px; }

/* sheet tabs, status bar */
.sheets { display: flex; align-items: center; height: 29px; padding-left: 17px; border-bottom: 1px solid #bdbdbd; }
.nav { width: 28px; }
.sheet { align-self: flex-start; width: 80px; height: 26px; margin: -1px 32px 0 30px; background: #fff; border: 1px solid #999; border-top: 0; border-bottom: 2px solid #217346; color: #217346; font-size: 15px; font-weight: 700; line-height: 22px; text-align: center; text-decoration: none; }
.hscroll { display: flex; align-items: center; flex: 0 0 771px; margin-left: auto; padding-right: 25px; }
.hscroll .dots { margin-right: 15px; }
.htrack { flex: 1; height: 19px; background: #dadada; }
.hthumb { width: 89%; height: 19px; background: #fff; border: 1px solid #ababab; }
.status { display: flex; align-items: center; height: 27px; padding-right: 9px; background: #f0f0f0; font-size: 13px; }
.ready { flex: 1; padding: 0 0 2px 7px; }
.view { width: 41px; height: 27px; padding-bottom: 2px; }
.view.on { background: #c8c8c8; }
.zb { width: 20px; height: 27px; padding-bottom: 2px; }
.zoom { width: 125px; height: 14px; margin-bottom: 2px; appearance: none; background: linear-gradient(#999, #999) center / 100% 1px no-repeat, linear-gradient(#999, #999) center / 1px 7px no-repeat; }
.zoom::-webkit-slider-thumb { appearance: none; width: 5px; height: 13px; background: #555; }
.pct { width: 42px; justify-content: flex-end; padding-bottom: 2px; }
.taskbar { height: 4px; padding-left: 60px; background: #1a1718; }
.peek { width: 430px; height: 4px; background: #f0f0f0; border-top: 1px solid #aaa; }
```
